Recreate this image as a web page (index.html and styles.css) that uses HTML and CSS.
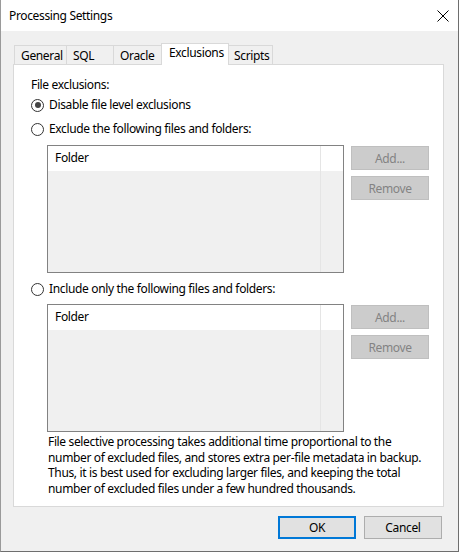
FILE: index.html
```html
<!DOCTYPE html>
<html>
<head>
<meta charset="utf-8">
<link rel="stylesheet" href="styles.css">
</head>
<body>
<div class="window">
  <div class="titlebar">
    <span class="title">Processing Settings</span>
    <svg class="close" width="12" height="12" viewBox="0 0 12 12"><path d="M0.5 0.5L11.5 11.5M11.5 0.5L0.5 11.5" stroke="#000" stroke-width="1" fill="none"/></svg>
  </div>
  <div class="content">
    <div class="tabs">
      <div class="tab t-general">General</div>
      <div class="tab t-sql">SQL</div>
      <div class="tab t-oracle">Oracle</div>
      <div class="tab t-excl active">Exclusions</div>
      <div class="tab t-scripts">Scripts</div>
    </div>
    <div class="panel">
      <div class="label">File exclusions:</div>
      <div class="radio r1"><span class="dot checked"></span><span>Disable file level exclusions</span></div>
      <div class="radio r2"><span class="dot"></span><span>Exclude the following files and folders:</span></div>
      <div class="group g1">
        <div class="list">
          <div class="list-head"><span class="col">Folder</span><span class="col-rest"></span></div>
          <div class="list-body"><span class="col"></span><span class="col-rest"></span></div>
        </div>
        <div class="side">
          <div class="btn dis">Add...</div>
          <div class="btn dis">Remove</div>
        </div>
      </div>
      <div class="radio r3"><span class="dot"></span><span>Include only the following files and folders:</span></div>
      <div class="group g2">
        <div class="list">
          <div class="list-head"><span class="col">Folder</span><span class="col-rest"></span></div>
          <div class="list-body"><span class="col"></span><span class="col-rest"></span></div>
        </div>
        <div class="side">
          <div class="btn dis">Add...</div>
          <div class="btn dis">Remove</div>
        </div>
      </div>
      <p class="note">File selective processing takes additional time proportional to the<br>number of excluded files, and stores extra per-file metadata in backup.<br>Thus, it is best used for excluding larger files, and keeping the total<br>number of excluded files under a few hundred thousands.</p>
    </div>
    <div class="footer">
      <div class="btn ok">OK</div>
      <div class="btn cancel">Cancel</div>
    </div>
  </div>
</div>
</body>
</html>
```
FILE: styles.css
```css
* { box-sizing: border-box; }
html, body { margin: 0; padding: 0; }
body {
  width: 459px;
  height: 552px;
  overflow: hidden;
  font-family: "Segoe UI", "Noto Sans", "Open Sans", sans-serif;
  font-size: 12px;
  letter-spacing: -0.35px;
  color: #000;
  background: #f0f0f0;
}
.window {
  width: 459px;
  height: 552px;
  background: #f0f0f0;
  border-left: 1px solid #9a9a9a;
  border-right: 1px solid #6e6e6e;
  border-bottom: 1px solid #6e6e6e;
  display: flex;
  flex-direction: column;
}
.titlebar {
  height: 31px;
  background: #fff;
  display: flex;
  align-items: center;
  padding-left: 8px;
  padding-right: 9px;
  justify-content: space-between;
}
.title { font-size: 12px; line-height: 16px; }
.close { display: block; }
.content {
  flex: 1;
  padding-top: 12px;
  padding-left: 12px;
}
.tabs {
  display: flex;
  align-items: flex-end;
  height: 21px;
  padding-left: 1px;
}
.tab {
  height: 19px;
  line-height: 19px;
  background: #f0f0f0;
  border: 1px solid #d9d9d9;
  border-bottom: none;
  margin-right: -1px;
  padding-left: 6px;
  font-size: 12px;
}
.t-general { width: 53px; }
.t-sql { width: 48px; }
.t-oracle { width: 49px; padding-left: 6px; }
.t-excl { width: 68px; }
.t-scripts { width: 45px; padding-left: 5px; }
.tab.active {
  height: 22px;
  background: #fff;
  position: relative;
  z-index: 2;
  margin-bottom: -1px;
  line-height: 18px;
  padding-left: 7px;
}
.panel {
  width: 431px;
  height: 443px;
  background: #fff;
  border: 1px solid #d9d9d9;
  padding: 12px 0 0 17px;
}
.label { line-height: 16px; height: 16px; }
.radio {
  display: flex;
  align-items: center;
  height: 16px;
  line-height: 16px;
}
.r1 { margin-top: 4px; }
.r2 { margin-top: 8px; }
.r3 { margin-top: 8px; }
.dot {
  width: 13px;
  height: 13px;
  border: 1px solid #333;
  border-radius: 50%;
  background: #fff;
  margin-right: 5px;
  position: relative;
  flex: none;
}
.dot.checked::after {
  content: "";
  position: absolute;
  left: 2.5px;
  top: 2.5px;
  width: 6px;
  height: 6px;
  border-radius: 50%;
  background: #444;
}
.group {
  display: flex;
  margin-left: 16px;
}
.g1 { margin-top: 8px; }
.g2 { margin-top: 7px; }
.list {
  width: 297px;
  height: 128px;
  border: 1px solid #828282;
  display: flex;
  flex-direction: column;
}
.list-head {
  height: 25px;
  background: #fff;
  display: flex;
}
.list-body {
  flex: 1;
  background: #f0f0f0;
  display: flex;
}
.col {
  width: 273px;
  border-right: 1px solid #e5e5e5;
  padding-left: 7px;
  line-height: 24px;
}
.col-rest { flex: 1; }
.side {
  margin-left: 7px;
  padding-top: 1px;
  display: flex;
  flex-direction: column;
  gap: 6px;
}
.btn {
  width: 78px;
  height: 24px;
  display: flex;
  align-items: center;
  justify-content: center;
  font-size: 12px;
}
.btn.dis {
  background: #cccccc;
  border: 1px solid #bfbfbf;
  color: #838383;
}
.note {
  margin: 2px 0 0 17px;
  width: 392px;
  line-height: 15.7px;
}
.footer {
  display: flex;
  justify-content: flex-end;
  gap: 8px;
  padding-right: 16px;
  margin-top: 9px;
}
.btn.ok, .btn.cancel {
  width: 78px;
  height: 23px;
  background: #e1e1e1;
}
.btn.ok { border: 2px solid #0078d7; }
.btn.cancel { border: 1px solid #adadad; }
```
